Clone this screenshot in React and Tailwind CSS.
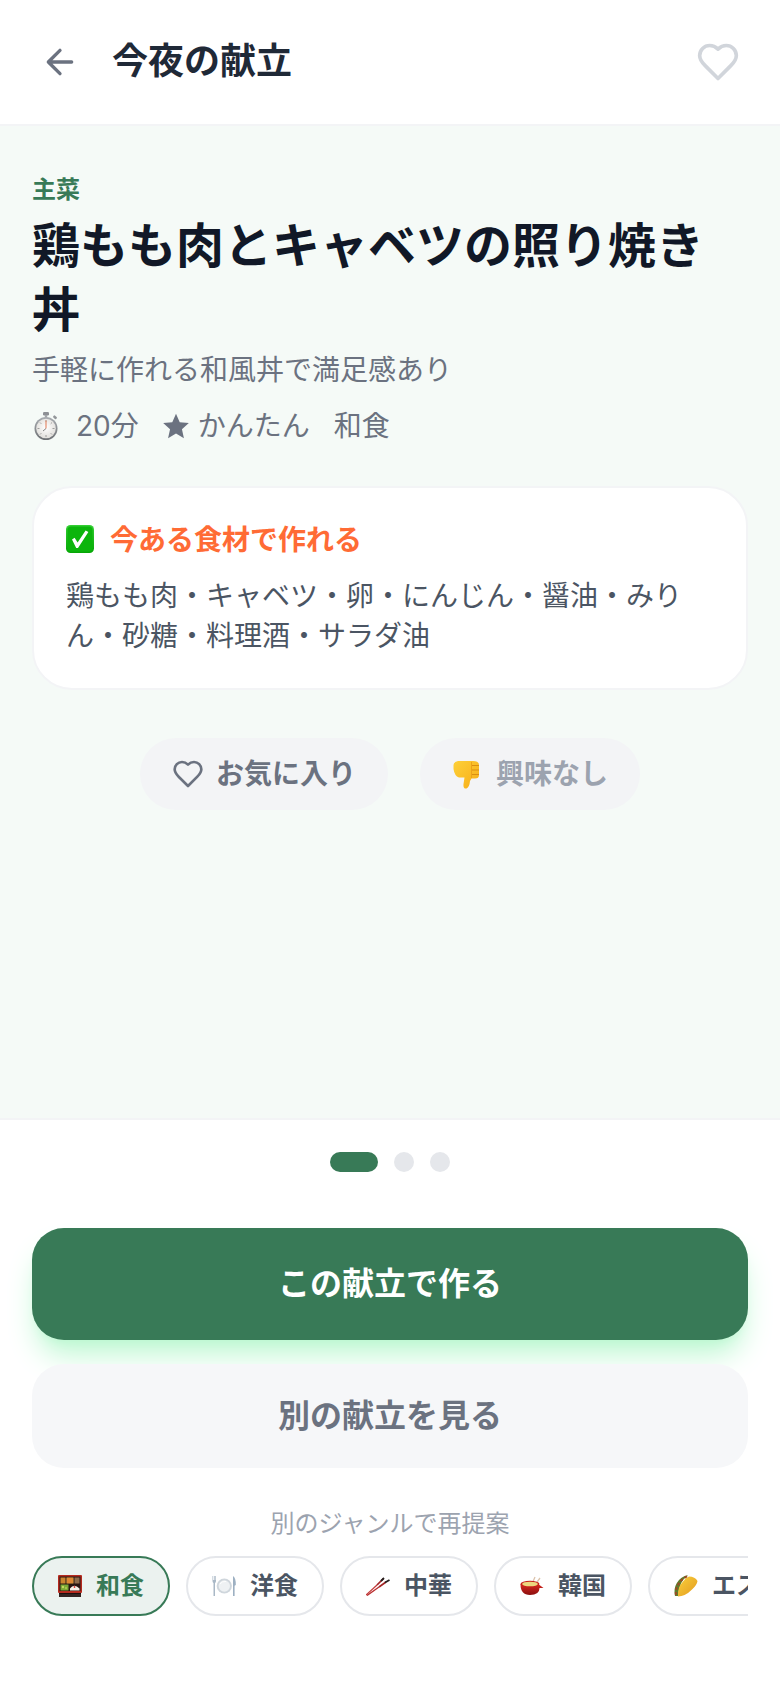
import React from "react";

const Stopwatch = () => (
  <svg width="28" height="30" viewBox="0 0 28 30" className="shrink-0">
    <defs>
      <linearGradient id="swRim" x1="0" y1="0" x2="0" y2="1">
        <stop offset="0" stopColor="#a9adb2" />
        <stop offset="1" stopColor="#6d7074" />
      </linearGradient>
      <radialGradient id="swFace" cx="0.5" cy="0.45" r="0.6">
        <stop offset="0" stopColor="#ffffff" />
        <stop offset="1" stopColor="#dedcd8" />
      </radialGradient>
    </defs>
    <rect x="11" y="1" width="6" height="3.500" rx="1.200" fill="#8d9095" />
    <rect x="12.800" y="4" width="2.400" height="3" fill="#a3a6aa" />
    <rect x="21" y="5" width="4" height="2.600" rx="1" transform="rotate(42 23 6.300)" fill="#93969a" />
    <circle cx="14" cy="17.500" r="11.500" fill="url(#swRim)" />
    <circle cx="14" cy="17.500" r="9.800" fill="url(#swFace)" />
    <path d="M14 9v2M14 24v2M5.500 17.500h2M20.500 17.500h2M8 11.500l1.300 1.300M20 11.500l-1.300 1.300M8 23.500l1.300-1.300M20 23.500l-1.300-1.300" stroke="#8a8a8a" strokeWidth="0.800" fill="none" />
    <path d="M14 9.500v8" stroke="#e48a6c" strokeWidth="1.200" fill="none" />
    <path d="M14 17.500l-3 2.500" stroke="#777" strokeWidth="0.900" fill="none" />
  </svg>
);
const Check = () => (
  <svg width="28" height="28" viewBox="0 0 28 28" className="-mt-[2px] shrink-0">
    <defs>
      <linearGradient id="chk" x1="0" y1="0" x2="0" y2="1">
        <stop offset="0" stopColor="#34cf34" />
        <stop offset="1" stopColor="#06a606" />
      </linearGradient>
    </defs>
    <rect width="28" height="28" rx="4.500" fill="url(#chk)" />
    <rect x="1.500" y="1.500" width="25" height="25" rx="3.500" fill="#0cb50c" />
    <path d="M6 14.500l2.600-1.800 3 4.800L19.600 5.500 22.400 7 12 23h-1.800z" fill="#fff" />
  </svg>
);
const Thumb = () => (
  <svg width="28" height="30" viewBox="0 0 28 30" className="shrink-0">
    <defs>
      <linearGradient id="thb" x1="0" y1="0" x2="1" y2="1">
        <stop offset="0" stopColor="#fdd039" />
        <stop offset="1" stopColor="#f7ad17" />
      </linearGradient>
    </defs>
    <path d="M1.500 6Q2 2.500 6 2H21Q27 2 27 6V16Q27 19.500 23 19.500H19.500L18 22Q17.500 28 14.500 29.500 11 30 11.500 25L12.500 18.500H7Q2.500 17 1.500 10z" fill="url(#thb)" />
    <path d="M19.500 6.500H27M19 11H27M19.500 15.500H27" stroke="#d98f12" strokeWidth="1" fill="none" />
    <path d="M19.500 3V19" stroke="#eda31a" strokeWidth="1" fill="none" />
  </svg>
);
const Bento = () => (
  <svg width="24" height="22" viewBox="0 0 24 22" className="shrink-0">
    <rect x="0" y="0" width="24" height="18" rx="1" fill="#b52a1e" />
    <rect x="1.500" y="1.500" width="21" height="14.500" fill="#2a1612" />
    <rect x="2.500" y="2.500" width="5" height="6" fill="#c9852f" />
    <rect x="8.500" y="2.500" width="7" height="6" fill="#e8a93c" />
    <path d="M10 3v5M12 3v5M14 3v5" stroke="#d1552a" strokeWidth="0.800" />
    <rect x="16.500" y="2.500" width="5" height="6" fill="#8d6b4b" />
    <rect x="2.500" y="9.500" width="8" height="6" fill="#7aa836" />
    <circle cx="5" cy="12" r="1.200" fill="#c3d960" />
    <circle cx="8" cy="13" r="1.200" fill="#a5c64a" />
    <path d="M12 15.500v-2q4-5.500 9.500 0v2z" fill="#f6f1e8" />
    <circle cx="16.500" cy="12" r="0.900" fill="#d9342b" />
    <rect x="1" y="18" width="22" height="4" fill="#332523" />
    <rect x="1" y="18" width="22" height="1" fill="#1b100e" />
  </svg>
);
const Plate = () => (
  <svg width="24" height="22" viewBox="0 0 24 22" className="shrink-0">
    <path d="M.5 1v5q0 1.500 1 2v13h1.500V8q1-.5 1-2V1h-.7v4h-.6V1h-.7v4H1.200V1z" fill="#a9b8c6" />
    <path d="M21 1q3 2 2.800 9l-1.200.8V21H21z" fill="#9db0c2" />
    <circle cx="12.300" cy="11" r="7.600" fill="#cfd6dc" />
    <circle cx="12.300" cy="11" r="5.700" fill="#eef1f3" />
    <path d="M8 9q2-3 6-2.500" stroke="#fff" strokeWidth="1" fill="none" />
  </svg>
);
const Chopsticks = () => (
  <svg width="24" height="20" viewBox="0 0 24 20" className="shrink-0">
    <path d="M0 19L11 9" stroke="#c23a3a" strokeWidth="1.200" />
    <path d="M1 19.500L13 11" stroke="#b92f30" strokeWidth="1.400" />
    <path d="M11 9L17.500 2.500" stroke="#a32526" strokeWidth="1.700" />
    <path d="M13 11L20 6" stroke="#a32526" strokeWidth="1.700" />
    <path d="M15 5L18 2" stroke="#26201f" strokeWidth="1.800" />
    <path d="M19 6.500L23.500 4" stroke="#26201f" strokeWidth="1.800" />
  </svg>
);
const Pot = () => (
  <svg width="24" height="20" viewBox="0 0 24 20" className="shrink-0">
    <defs>
      <linearGradient id="pot" x1="0" y1="0" x2="0" y2="1">
        <stop offset="0" stopColor="#d92a22" />
        <stop offset="1" stopColor="#8a0e0e" />
      </linearGradient>
    </defs>
    <path d="M12 8L15 1M15 9L20 2" stroke="#dcc4ad" strokeWidth="1.300" />
    <path d="M.5 8q0 11 9.500 11t9.500-7l4 0-4-3z" fill="url(#pot)" />
    <ellipse cx="10" cy="8" rx="9.500" ry="3.300" fill="#c9201a" />
    <ellipse cx="10" cy="8" rx="7.800" ry="2.300" fill="#ecd77f" />
  </svg>
);
const Taco = () => (
  <svg width="24" height="22" viewBox="0 0 24 22" className="shrink-0">
    <defs>
      <linearGradient id="tac" x1="0" y1="0" x2="1" y2="1">
        <stop offset="0" stopColor="#f9d03c" />
        <stop offset="1" stopColor="#e39a1f" />
      </linearGradient>
    </defs>
    <path d="M1 21Q-1 12 5 5 10 0 14 .5 5 6 4 21z" fill="#5d7d2c" />
    <path d="M2 20Q1 13 6 7 9 3 14 1" stroke="#9c4a25" strokeWidth="2" fill="none" strokeDasharray="3 2" />
    <path d="M4 21.500Q3.500 12 9 6.500 12 2.500 15 1.500 21 1.500 23.500 6 23 10 18 14.500 11 21.500 4 21.500z" fill="url(#tac)" />
  </svg>
);
const Heart = ({ size, color }) => (
  <svg width={size} height={size} viewBox="0 0 24 24" fill="none" stroke={color} strokeWidth="2" strokeLinecap="round" strokeLinejoin="round" className="shrink-0">
    <path d="M19 14c1.490-1.460 3-3.210 3-5.500A5.500 5.500 0 0 0 16.500 3c-1.760 0-3 .5-4.500 2-1.500-1.500-2.740-2-4.500-2A5.500 5.500 0 0 0 2 8.500c0 2.300 1.500 4.050 3 5.500l7 7Z" />
  </svg>
);

function Chip({ icon, label, active }) {
  return (
    <div
      className={
        active
          ? "flex h-[60px] shrink-0 items-center gap-[14px] rounded-full border-2 border-[#387a57] bg-[#ebf2ef] px-[24px] text-[24px] leading-[32px] font-bold text-[#387a57]"
          : "flex h-[60px] shrink-0 items-center gap-[14px] rounded-full border-2 border-[#e5e7eb] bg-white px-[24px] text-[24px] leading-[32px] font-bold text-[#4b5563]"
      }
    >
      {icon}
      <span>{label}</span>
    </div>
  );
}

export default function App() {
  return (
    <div
      className="flex h-[1688px] w-[780px] flex-col overflow-hidden bg-white"
      style={{ fontFamily: 'Inter, "Noto Sans CJK JP", sans-serif' }}
    >
      <header className="flex h-[126px] shrink-0 items-center justify-between border-b-2 border-[#f3f4f6] pr-[40px] pl-[40px]">
        <div className="flex items-center gap-[32px]">
          <svg width="40" height="40" viewBox="0 0 24 24" fill="none" stroke="#6b7280" strokeWidth="2" strokeLinecap="round" strokeLinejoin="round">
            <path d="M19 12H5M12 19l-7-7 7-7" />
          </svg>
          <h1 className="pb-[2px] text-[36px] leading-[56px] font-bold text-[#1f2937]">今夜の献立</h1>
        </div>
        <Heart size={44} color="#d1d5db" />
      </header>

      <main className="flex-1 border-b-2 border-[#f3f4f6] bg-[#f5faf7] px-[32px] pt-[48px]">
        <div className="mb-[8px] text-[24px] leading-[32px] font-bold text-[#387a57]">主菜</div>
        <h2 className="text-[48px] leading-[64px] font-bold text-[#111827]">鶏もも肉とキャベツの照り焼き丼</h2>
        <p className="mt-[8px] text-[28px] leading-[40px] text-[#6b7280]">手軽に作れる和風丼で満足感あり</p>
        <div className="mt-[16px] flex items-center text-[28px] leading-[40px] text-[#6b7280]">
          <Stopwatch />
          <span className="ml-[16px]">20分</span>
          <svg width="28" height="28" viewBox="0 0 24 24" fill="#6b7280" className="ml-[23px] shrink-0">
            <path d="M12 1.500l3.200 7.200 7.800.8-5.900 5.200 1.700 7.700L12 18.400l-6.800 4 1.700-7.700L1 9.500l7.800-.8z" />
          </svg>
          <span className="ml-[8px]">かんたん</span>
          <span className="ml-[24px]">和食</span>
        </div>

        <section className="mt-[40px] rounded-[40px] border-2 border-[#f3f4f6] bg-white p-[32px]">
          <div className="flex items-center gap-[16px] text-[28px] leading-[40px] font-bold text-[#ff6b35]">
            <Check />
            <span>今ある食材で作れる</span>
          </div>
          <p className="mt-[16px] text-[28px] leading-[40px] text-[#4b5563]">
            鶏もも肉・キャベツ・卵・にんじん・醤油・みりん・砂糖・料理酒・サラダ油
          </p>
        </section>

        <div className="mt-[48px] flex justify-center gap-[32px]">
          <button className="flex h-[72px] items-center gap-[12px] rounded-full bg-[#f3f4f6] px-[32px] text-[28px] leading-[40px] font-bold text-[#6b7280]">
            <Heart size={32} color="#6b7280" />
            お気に入り
          </button>
          <button className="flex h-[72px] items-center gap-[16px] rounded-full bg-[#f3f4f6] px-[32px] text-[28px] leading-[40px] font-bold text-[#9ca3af]">
            <Thumb />
            興味なし
          </button>
        </div>
      </main>

      <footer className="shrink-0 px-[32px] pt-[32px] pb-[72px]">
        <div className="flex justify-center gap-[16px]">
          <div className="h-[20px] w-[48px] rounded-full bg-[#387a57]" />
          <div className="h-[20px] w-[20px] rounded-full bg-[#e5e7eb]" />
          <div className="h-[20px] w-[20px] rounded-full bg-[#e5e7eb]" />
        </div>
        <button className="mt-[56px] flex h-[112px] w-full items-center justify-center rounded-[32px] bg-[#387a57] text-[32px] font-bold text-white shadow-[0_20px_30px_-6px_#bbf7d0,0_8px_12px_-8px_#bbf7d0]">
          この献立で作る
        </button>
        <button className="relative mt-[24px] flex h-[104px] w-full items-center justify-center rounded-[32px] bg-[#f6f7f9] text-[32px] font-bold text-[#6b7280]">
          別の献立を見る
        </button>
        <p className="mt-[40px] text-center text-[24px] leading-[32px] text-[#9ca3af]">別のジャンルで再提案</p>
        <div className="mt-[16px] flex gap-[16px] overflow-hidden">
          <Chip active icon={<Bento />} label="和食" />
          <Chip icon={<Plate />} label="洋食" />
          <Chip icon={<Chopsticks />} label="中華" />
          <Chip icon={<Pot />} label="韓国" />
          <Chip icon={<Taco />} label="エスニック" />
        </div>
      </footer>
    </div>
  );
}
